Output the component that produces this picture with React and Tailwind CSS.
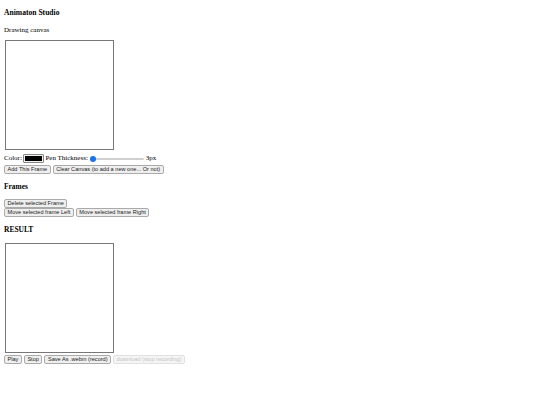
export default function App() {
  const btn =
    "h-[9px] px-[2.5px] bg-[#efefef] border border-[#aaa] rounded-[2px] text-[5.6px] leading-none text-[#222] font-['Liberation_Sans',Arial,sans-serif] whitespace-nowrap"
  const btnOff =
    "h-[9px] px-[2.5px] bg-[#f5f5f5] border border-[#e0e0e0] rounded-[2px] text-[5.6px] leading-none text-[#c4c4c4] font-['Liberation_Sans',Arial,sans-serif] whitespace-nowrap"

  return (
    <div className="w-[540px] h-[405px] bg-white px-[4px] font-['Liberation_Serif','Times_New_Roman',serif] text-black">
      <h4 className="pt-[8px] text-[7.6px] font-bold leading-[10px]">Animaton Studio</h4>
      <p className="mt-[8px] text-[7px] leading-[9px]">Drawing canvas</p>

      {/* drawing canvas */}
      <div className="mt-[5px] ml-[1px] w-[109px] h-[110px] border border-[#777] bg-white" />

      <div className="flex items-center h-[9px] mt-[4px] text-[7px] leading-none">
        <span>Color:</span>
        <span className="ml-[1px] w-[21px] h-[9px] border border-[#888] rounded-[1px] bg-[#efefef] p-[1px] flex">
          <span className="flex-1 bg-black" />
        </span>
        <span className="ml-[1.5px]">Pen Thickness:</span>
        <span className="ml-[2px] relative w-[54px] h-[6px] flex items-center">
          <span className="w-full h-[2px] rounded-full bg-[#e5e5e5] border border-[#d0d0d0]" />
          <span className="absolute left-0 w-[6px] h-[6px] rounded-full bg-[#1a73e8]" />
        </span>
        <span className="ml-[2px]">3px</span>
      </div>

      <div className="flex gap-[2px] mt-[2px]">
        <button className={btn}>Add This Frame</button>
        <button className={btn}>Clear Canvas (to add a new one... Or not)</button>
      </div>

      <h3 className="mt-[7px] text-[7.4px] font-bold leading-[11px]">Frames</h3>

      <div className="mt-[7px] flex flex-col gap-0">
        <div className="flex">
          <button className={btn}>Delete selected Frame</button>
        </div>
        <div className="flex gap-[2px]">
          <button className={btn}>Move selected frame Left</button>
          <button className={btn}>Move selected frame Right</button>
        </div>
      </div>

      <h3 className="mt-[7px] text-[7.5px] font-bold leading-[11px]">RESULT</h3>

      {/* result canvas */}
      <div className="mt-[8px] ml-[1px] w-[109px] h-[110px] border border-[#777] bg-white" />

      <div className="flex gap-[2px] mt-[2px]">
        <button className={btn}>Play</button>
        <button className={btn}>Stop</button>
        <button className={btn}>Save As .webm (record)</button>
        <button className={btnOff} disabled>download (stop recording)</button>
      </div>
    </div>
  )
}
